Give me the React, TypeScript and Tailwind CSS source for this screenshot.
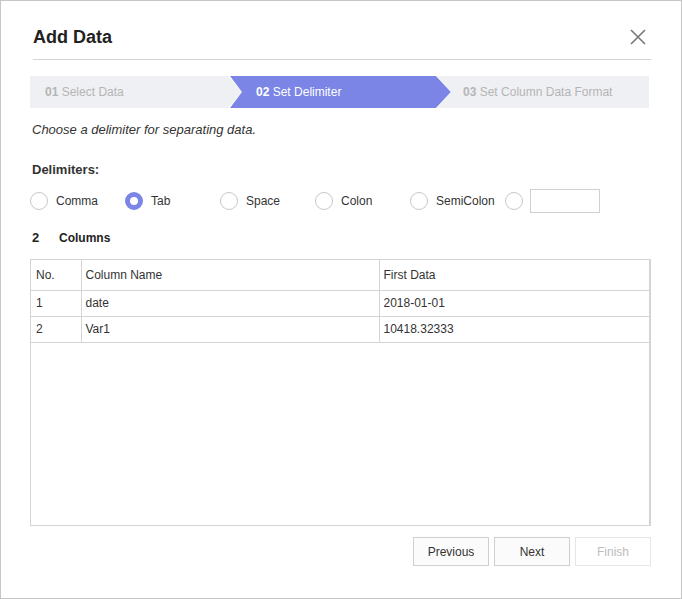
import { useState } from "react";

const delimiters = ["Comma", "Tab", "Space", "Colon", "SemiColon"];

const rows = [
  { no: "1", name: "date", first: "2018-01-01" },
  { no: "2", name: "Var1", first: "10418.32333" },
];

function Radio({ checked }: { checked: boolean }) {
  return (
    <span
      className={`block h-[18px] w-[18px] shrink-0 rounded-full ${
        checked ? "border-[5px] border-[#7a85e6] bg-white" : "border border-[#c8c8c8] bg-white"
      }`}
    />
  );
}

export default function App() {
  const [selected, setSelected] = useState("Tab");

  return (
    <div
      className="flex h-[599px] w-[682px] flex-col border border-[#c6c6c6] bg-white text-[#333]"
      style={{ fontFamily: '"Liberation Sans", Arial, sans-serif' }}
    >
      {/* header */}
      <div className="ml-[32px] mr-[30px] flex items-center justify-between border-b border-[#d6d6d6] pt-[24px] pb-[10px]">
        <h1 className="text-[18px] font-bold leading-[24px] text-[#222]">Add Data</h1>
        <button className="mr-[5px] text-[#777]" aria-label="Close">
          <svg width="16" height="16" viewBox="0 0 16 16" fill="none" stroke="currentColor" strokeWidth="1.6">
            <path d="M1 1L15 15M15 1L1 15" />
          </svg>
        </button>
      </div>

      <div className="flex flex-1 flex-col pl-[29px] pr-[30px]">
        {/* steps */}
        <div className="mt-[16px] mr-[2px] flex h-[32px] text-[12px] leading-[32px]">
          <div className="w-[212px] bg-[#eff0f3] pl-[15px] text-[#b5b5b5] [clip-path:polygon(0_0,calc(100%-14px)_0,100%_50%,calc(100%-14px)_100%,0_100%)]">
            <b>01</b> Select Data
          </div>
          <div className="-ml-[12px] w-[221px] bg-[#7a85e6] pl-[26px] text-white [clip-path:polygon(0_0,calc(100%-15px)_0,100%_50%,calc(100%-15px)_100%,0_100%,12px_50%)]">
            <b>02</b> Set Delimiter
          </div>
          <div className="-ml-[15px] flex-1 bg-[#eff0f3] pl-[27px] text-[#b5b5b5] [clip-path:polygon(0_0,100%_0,100%_100%,0_100%,15px_50%)]">
            <b>03</b> Set Column Data Format
          </div>
        </div>

        <p className="mt-[14px] pl-[2px] text-[13px] italic leading-[16px] text-[#333]">
          Choose a delimiter for separating data.
        </p>

        <p className="mt-[24px] pl-[2px] text-[13px] font-bold leading-[16px] text-[#333]">Delimiters:</p>

        <div className="mt-[11px] flex h-[24px] items-center">
          {delimiters.map((d) => (
            <label
              key={d}
              className="flex w-[95px] cursor-pointer items-center gap-2 text-[12px]"
              onClick={() => setSelected(d)}
            >
              <Radio checked={selected === d} />
              <span>{d}</span>
            </label>
          ))}
          <Radio checked={selected === "Other"} />
          <input className="ml-[7px] h-[24px] w-[70px] border border-[#d0d0d0] outline-none" />
        </div>

        <div className="mt-[17px] flex items-center pl-[2px] text-[12px] font-bold leading-[16px] text-[#222]">
          <span className="w-[27px] text-[13px]">2</span>
          <span>Columns</span>
        </div>

        {/* table */}
        <div className="mt-[13px] h-[267px] border border-r-2 border-[#d4d4d4]">
          <table className="w-full table-fixed border-collapse text-[12px] text-[#333]">
            <colgroup>
              <col className="w-[50px]" />
              <col className="w-[298px]" />
              <col />
            </colgroup>
            <thead>
              <tr className="h-[30px] border-b border-[#d4d4d4]">
                <th className="pl-[5px] text-left font-normal">No.</th>
                <th className="border-l border-[#d4d4d4] pl-[4px] text-left font-normal">Column Name</th>
                <th className="border-l border-[#d4d4d4] pl-[4px] text-left font-normal">First Data</th>
              </tr>
            </thead>
            <tbody>
              {rows.map((r) => (
                <tr key={r.no} className="h-[26px] border-b border-[#d4d4d4]">
                  <td className="pl-[5px]">{r.no}</td>
                  <td className="border-l border-[#d4d4d4] pl-[4px]">{r.name}</td>
                  <td className="border-l border-[#d4d4d4] pl-[4px]">{r.first}</td>
                </tr>
              ))}
            </tbody>
          </table>
        </div>

        {/* footer */}
        <div className="mt-[11px] flex justify-end gap-[5px] text-[12px]">
          <button className="h-[29px] w-[76px] border border-[#cfcfcf] bg-[#fbfbfb] text-[#333]">Previous</button>
          <button className="h-[29px] w-[76px] border border-[#cfcfcf] bg-[#fbfbfb] text-[#333]">Next</button>
          <button className="h-[29px] w-[76px] border border-[#e6e6e6] bg-white text-[#bdbdbd]" disabled>
            Finish
          </button>
        </div>
      </div>
    </div>
  );
}
